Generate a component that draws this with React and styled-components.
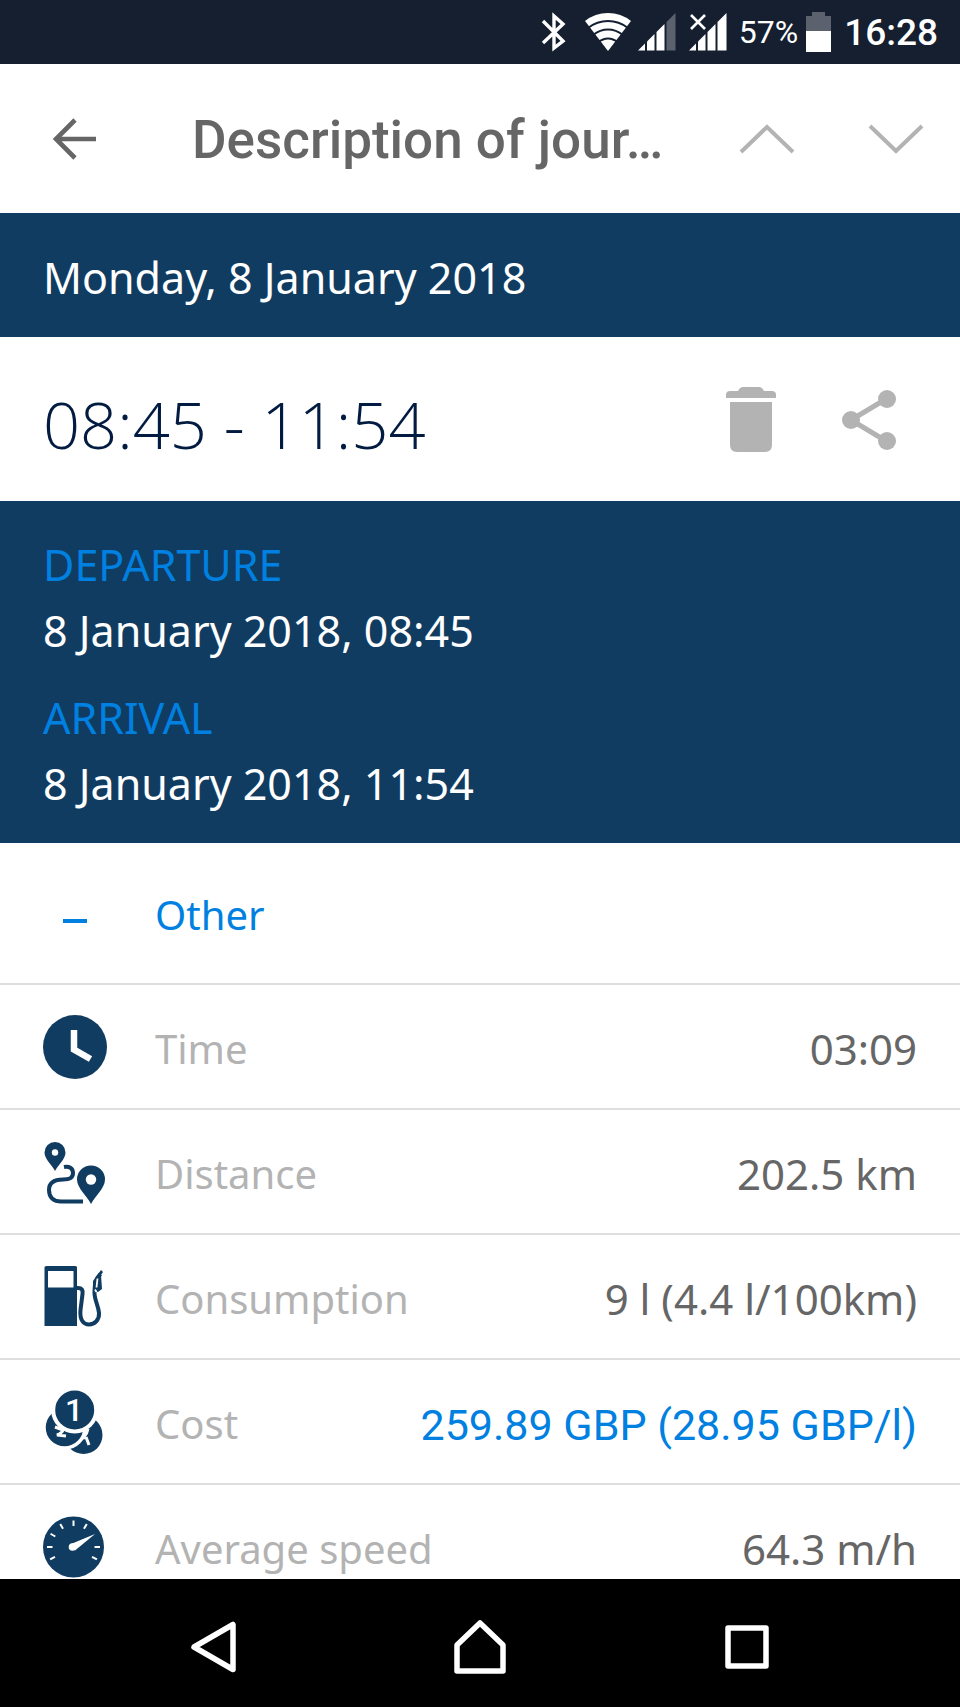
import styled, { createGlobalStyle } from "styled-components"

const NAVY = "#113c61"
const BLUE = "#0080e0"

const GlobalStyle = createGlobalStyle`
  * {
    box-sizing: border-box;
  }

  body {
    margin: 0;
    background: #fff;
    font-family: "Noto Sans", sans-serif;
  }

  svg {
    display: block;
  }
`

const Screen = styled.div`
  display: flex;
  flex-direction: column;
  height: 100vh;
  overflow: hidden;
`

const StatusBar = styled.div`
  display: flex;
  flex: none;
  align-items: center;
  justify-content: flex-end;
  height: 64px;
  padding-right: 22px;
  background: #151f30;
  color: #fff;
  font-family: Roboto, sans-serif;
`

const StatusIcons = styled.div`
  display: flex;
  align-items: center;
  gap: 12px;
  margin-right: 12px;
`

const SignalIcons = styled.div`
  display: flex;
  gap: 6px;
`

const Battery = styled.span`
  display: flex;
  align-items: center;
  gap: 8px;
  margin-right: 12px;
  font-size: 32px;
`

const Clock = styled.span`
  font-size: 37px;
  font-weight: 500;
`

const AppBar = styled.header`
  display: flex;
  flex: none;
  align-items: center;
  height: 149px;
  padding: 0 36px 0 53px;
  background: #fff;
`

const IconButton = styled.button`
  display: flex;
  flex: none;
  padding: 0;
  border: 0;
  background: none;
  color: ${(props) => props.$color || "#b3b3b3"};
`

const Title = styled.h1`
  flex: 1;
  min-width: 0;
  margin: 0 24px 0 95px;
  padding-top: 3px;
  overflow: hidden;
  color: #666;
  font-family: Roboto, sans-serif;
  font-size: 53px;
  font-weight: 500;
  white-space: nowrap;
`

const Steps = styled.div`
  display: flex;
  gap: 73px;
`

const DateBar = styled.div`
  display: flex;
  flex: none;
  align-items: center;
  height: 124px;
  padding: 4px 43px 0;
  background: ${NAVY};
  color: #fff;
  font-size: 43px;
`

const TimeBar = styled.div`
  display: flex;
  flex: none;
  align-items: center;
  justify-content: space-between;
  height: 164px;
  padding: 2px 64px 0 43px;
`

const TimeRange = styled.h2`
  margin: 0;
  padding-top: 8px;
  color: #021b41;
  font-family: "Open Sans", sans-serif;
  font-size: 65px;
  font-weight: 300;
  white-space: nowrap;
`

const Actions = styled.div`
  display: flex;
  align-items: center;
  gap: 66px;
`

const Stops = styled.dl`
  display: flex;
  flex: none;
  flex-direction: column;
  gap: 21px;
  margin: 0;
  padding: 31px 43px 26px;
  background: ${NAVY};
  font-size: 43px;
  line-height: 66px;
`

const StopLabel = styled.dt`
  color: ${BLUE};
`

const StopTime = styled.dd`
  margin: 0;
  color: #fff;
`

const Details = styled.main`
  flex: 1;
  min-height: 0;
  overflow: hidden;
`

const Category = styled.button`
  display: flex;
  align-items: center;
  gap: 48px;
  width: 100%;
  height: 142px;
  padding: 2px 43px 0;
  border: 0;
  border-bottom: 2px solid #dedede;
  background: none;
  color: ${BLUE};
  font-family: inherit;
  font-size: 40px;
`

const Rows = styled.dl`
  margin: 0;
`

const Row = styled.div`
  display: flex;
  align-items: center;
  gap: 48px;
  height: 125px;
  padding: 0 43px;
  border-bottom: 2px solid #dedede;
`

const RowLabel = styled.dt`
  flex: 1;
  padding-top: 4px;
  color: #b3b3b3;
  font-size: 40px;
`

const RowValue = styled.dd`
  margin: 0;
  padding-top: 4px;
  color: #666;
  font-size: 42px;
  white-space: nowrap;
`

const CostLink = styled.a`
  color: ${BLUE};
  font-family: Roboto, sans-serif;
  font-size: 43px;
  text-decoration: none;
`

const NavBar = styled.nav`
  display: flex;
  flex: none;
  height: 128px;
  padding: 0 80px;
  background: #000;
`

const NavButton = styled.button`
  display: flex;
  flex: 1;
  align-items: center;
  justify-content: center;
  padding: 8px 0 0;
  border: 0;
  background: none;
  color: #fff;
`

function BluetoothIcon() {
  return (
    <svg width="32" height="40" viewBox="0 0 32 40" fill="none" stroke="#fff" strokeWidth="3.4">
      <path d="M2 9 22 29 13 36V4l9 8L2 31" />
    </svg>
  )
}

function WifiIcon() {
  return (
    <svg width="46" height="40" viewBox="0 0 46 40">
      <path d="M23 39 0 9Q10 1 23 1T46 9Z" fill="#fff" />
      <g fill="none" stroke="#151f30" strokeWidth="2">
        <path d="M3 16Q12 9 23 9T43 16" />
        <path d="M8 23Q15 17.500 23 17.500T38 23" />
        <path d="M13 30.500Q18 26.500 23 26.500T33 30.500" />
      </g>
    </svg>
  )
}

function SignalIcon({ weak }) {
  return (
    <svg width="39" height="40" viewBox="0 0 39 40" fill="#fff">
      <path d="M1 38.500 8 31.500V38.500Z" />
      <path d="M10 29.500 17.500 22V38.500H10Z" />
      <path d="M19.500 20 27.500 12V38.500H19.500Z" />
      <path d="M29.500 10 38.500 1V38.500H29.500Z" fillOpacity={weak ? 0.3 : 1} />
      {!weak && <path d="m3 3 14 14M17 3 3 17" stroke="#fff" strokeWidth="2.6" />}
    </svg>
  )
}

function BatteryIcon() {
  return (
    <svg width="26" height="40" viewBox="0 0 26 40" fill="#fff">
      <path d="M6 0h13v4h6v15H0V4h6Z" fillOpacity="0.3" />
      <path d="M0 19h25v21H0Z" />
    </svg>
  )
}

function BackArrow() {
  return (
    <svg width="44" height="42" viewBox="0 0 44 42" fill="none" stroke="currentColor" strokeWidth="4.6">
      <path d="M22 2 3 21l19 19M3 21h40" />
    </svg>
  )
}

function Chevron({ down }) {
  return (
    <svg width="56" height="30" viewBox="0 0 56 30" fill="none" stroke="currentColor" strokeWidth="4">
      <path d={down ? "M2 2 28 27 54 2" : "M2 28 28 3 54 28"} />
    </svg>
  )
}

function TrashIcon() {
  return (
    <svg width="50" height="66" viewBox="0 0 50 66" fill="currentColor">
      <path d="M0 11V8q0-4 4-4h8q2-4 5-4h16q3 0 5 4h8q4 0 4 4v3Z" />
      <path d="M4 15h42v43q0 7-7 7H11q-7 0-7-7Z" />
    </svg>
  )
}

function ShareIcon() {
  return (
    <svg width="54" height="60" viewBox="0 0 54 60" fill="currentColor">
      <path d="M44 9 9 30l35 21" fill="none" stroke="currentColor" strokeWidth="5" />
      <circle cx="45" cy="9" r="9" />
      <circle cx="9" cy="30" r="9" />
      <circle cx="45" cy="51" r="9" />
    </svg>
  )
}

function MinusIcon() {
  return (
    <svg width="64" height="64" viewBox="0 0 64 64" fill="currentColor">
      <path d="M20 37h24v4H20Z" />
    </svg>
  )
}

function ClockIcon() {
  return (
    <svg width="64" height="64" viewBox="0 0 64 64">
      <circle cx="32" cy="32" r="32" fill={NAVY} />
      <path d="M31 15v19.500l16.500 9.500" fill="none" stroke="#fff" strokeWidth="6.500" />
    </svg>
  )
}

function DistanceIcon() {
  return (
    <svg width="64" height="64" viewBox="0 0 64 64" fill={NAVY}>
      <path d="M12 31C9 25 1.500 19 1.500 12.500a10.500 10.500 0 0 1 21 0C22.500 19 15 25 12 31Z" />
      <path d="M48 64C44 56 34 48 34 39.500a14 14 0 0 1 28 0C62 48 52 56 48 64Z" />
      <circle cx="12" cy="12.500" r="3.200" fill="#fff" />
      <circle cx="48" cy="39.500" r="5.200" fill="#fff" />
      <path
        d="M21 27c5-1 9 1 9 6 0 6-5 6.500-10 6.500C11 39.500 6 43 6 50c0 8 5 11.500 12 11.500h22"
        fill="none"
        stroke={NAVY}
        strokeWidth="4"
      />
    </svg>
  )
}

function FuelIcon() {
  return (
    <svg width="64" height="64" viewBox="0 0 64 64">
      <path d="M3.500 1h29q1.500 0 1.500 1.500V61H1.500V2.500Q1.500 1 3.500 1Z" fill={NAVY} />
      <path d="M5 6h25.500v16.500H5Z" fill="#fff" />
      <path
        d="M34 23h1c4 0 5 2 4.500 6L37.500 45c-1 10 3 14.500 8.500 14.500S56.500 55 56 48c-.5-7-4.500-13-4.500-20 0-9 1-14 6-19"
        fill="none"
        stroke={NAVY}
        strokeWidth="4"
      />
      <path d="M50 16 58 5l2 2-2 3 1 14-4 3-5-1Z" fill={NAVY} />
      <path d="m54.500 13.500-1 9M52 24.500l1.500 2.500" stroke="#fff" strokeWidth="1.800" />
    </svg>
  )
}

const CoinDigit = styled.text`
  fill: #fff;
  font-family: Roboto, sans-serif;
  font-size: 32px;
  font-weight: 500;
  text-anchor: middle;
`

function CostIcon() {
  return (
    <svg width="64" height="64" viewBox="0 0 64 64" fill={NAVY}>
      <circle cx="40.500" cy="45" r="19" />
      <circle cx="21.500" cy="37.500" r="20.500" stroke="#fff" strokeWidth="3.500" />
      <path
        d="m12 37 8 3q-1 3-6 5l9 1M45 39q-1 5-4 8l1 2M43 47l3 8"
        fill="none"
        stroke="#fff"
        strokeWidth="3"
      />
      <circle cx="31.700" cy="20" r="21.500" stroke="#fff" strokeWidth="4" />
      <CoinDigit x="31" y="31">1</CoinDigit>
    </svg>
  )
}

const gaugeTicks = [-118, -90, -60, -30, 0, 30, 90, 118]

function SpeedIcon() {
  return (
    <svg width="64" height="64" viewBox="0 0 64 64">
      <circle cx="30.500" cy="32" r="30.500" fill={NAVY} />
      {gaugeTicks.map((angle) => (
        <path
          key={angle}
          d="M30.500 5.500v5.500"
          stroke="#fff"
          strokeWidth="2"
          transform={`rotate(${angle} 30.500 32)`}
        />
      ))}
      <path d="M28 29 52 19 32 35.500Z" fill="#fff" />
      <circle cx="29.500" cy="32" r="3.800" fill="#fff" />
    </svg>
  )
}

function NavIcon({ d }) {
  return (
    <svg
      width="54"
      height="54"
      viewBox="0 0 54 54"
      fill="none"
      stroke="currentColor"
      strokeWidth="5.500"
      strokeLinejoin="round"
    >
      <path d={d} />
    </svg>
  )
}

const stops = [
  { label: "DEPARTURE", time: "8 January 2018, 08:45" },
  { label: "ARRIVAL", time: "8 January 2018, 11:54" },
]

const rows = [
  { label: "Time", value: "03:09", Icon: ClockIcon },
  { label: "Distance", value: "202.5 km", Icon: DistanceIcon },
  { label: "Consumption", value: "9 l (4.4 l/100km)", Icon: FuelIcon },
  { label: "Cost", value: "259.89 GBP (28.95 GBP/l)", Icon: CostIcon, link: true },
  { label: "Average speed", value: "64.3 m/h", Icon: SpeedIcon },
]

export default function App() {
  return (
    <Screen>
      <GlobalStyle />
      <StatusBar>
        <StatusIcons>
          <BluetoothIcon />
          <SignalIcons>
            <WifiIcon />
            <SignalIcon weak />
          </SignalIcons>
          <SignalIcon />
        </StatusIcons>
        <Battery>
          57%
          <BatteryIcon />
        </Battery>
        <Clock>16:28</Clock>
      </StatusBar>

      <AppBar>
        <IconButton $color="#666" aria-label="Back">
          <BackArrow />
        </IconButton>
        <Title>Description of jour…</Title>
        <Steps>
          <IconButton aria-label="Previous journey">
            <Chevron />
          </IconButton>
          <IconButton aria-label="Next journey">
            <Chevron down />
          </IconButton>
        </Steps>
      </AppBar>

      <DateBar>Monday, 8 January 2018</DateBar>

      <TimeBar>
        <TimeRange>08:45 - 11:54</TimeRange>
        <Actions>
          <IconButton aria-label="Delete">
            <TrashIcon />
          </IconButton>
          <IconButton aria-label="Share">
            <ShareIcon />
          </IconButton>
        </Actions>
      </TimeBar>

      <Stops>
        {stops.map((stop) => (
          <div key={stop.label}>
            <StopLabel>{stop.label}</StopLabel>
            <StopTime>{stop.time}</StopTime>
          </div>
        ))}
      </Stops>

      <Details>
        <Category>
          <MinusIcon />
          Other
        </Category>
        <Rows>
          {rows.map(({ label, value, Icon, link }) => (
            <Row key={label}>
              <Icon />
              <RowLabel>{label}</RowLabel>
              <RowValue>{link ? <CostLink href="#cost">{value}</CostLink> : value}</RowValue>
            </Row>
          ))}
        </Rows>
      </Details>

      <NavBar>
        <NavButton aria-label="Back">
          <NavIcon d="M47 4.500V49.500L8 27Z" />
        </NavButton>
        <NavButton aria-label="Home">
          <NavIcon d="M27 3 50 25V51H4V25Z" />
        </NavButton>
        <NavButton aria-label="Recent apps">
          <NavIcon d="M8 8H46V46H8Z" />
        </NavButton>
      </NavBar>
    </Screen>
  )
}
